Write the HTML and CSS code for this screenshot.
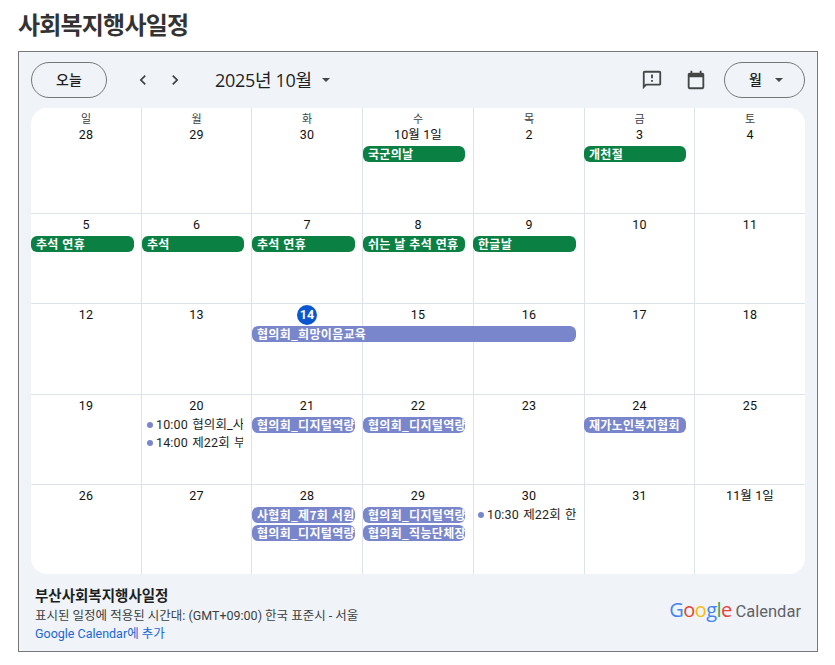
FILE: index.html
```html
<!DOCTYPE html>
<html lang="ko">
<head>
<meta charset="utf-8">
<title>사회복지행사일정</title>
<link rel="stylesheet" href="styles.css">
</head>
<body>
<h1 class="page-title">사회복지행사일정</h1>
<section class="frame">
  <header class="toolbar">
    <button class="pill today">오늘</button>
    <div class="nav">
      <svg class="chev" viewBox="0 0 24 24"><path d="M15.4 7.4 14 6l-6 6 6 6 1.4-1.4L10.8 12z"/></svg>
      <svg class="chev" viewBox="0 0 24 24"><path d="M8.6 7.4 10 6l6 6-6 6-1.4-1.4L13.2 12z"/></svg>
    </div>
    <div class="month">2025년 10월<span class="caret"></span></div>
    <div class="tools">
      <svg class="tool" viewBox="0 0 24 24"><path d="M20 2H4c-1.1 0-1.99.9-1.99 2L2 22l4-4h14c1.1 0 2-.9 2-2V4c0-1.1-.9-2-2-2zm0 14H5.17L4 17.17V4h16v12zM11 12h2v2h-2zm0-6h2v4h-2z"/></svg>
      <svg class="tool" viewBox="0 0 24 24"><path d="M19 4h-1V2h-2v2H8V2H6v2H5c-1.11 0-1.99.9-1.99 2L3 20c0 1.1.89 2 2 2h14c1.1 0 2-.9 2-2V6c0-1.1-.9-2-2-2zm0 16H5V9h14v11z"/></svg>
      <button class="pill view">월<span class="caret small"></span></button>
    </div>
  </header>

  <div class="cal">
    <div class="week first">
      <div class="cell"><span class="dow">일</span><span class="date">28</span></div>
      <div class="cell"><span class="dow">월</span><span class="date">29</span></div>
      <div class="cell"><span class="dow">화</span><span class="date">30</span></div>
      <div class="cell"><span class="dow">수</span><span class="date">10월 1일</span></div>
      <div class="cell"><span class="dow">목</span><span class="date">2</span></div>
      <div class="cell"><span class="dow">금</span><span class="date">3</span></div>
      <div class="cell"><span class="dow">토</span><span class="date">4</span></div>
      <div class="ev green c4">국군의날</div>
      <div class="ev green c6">개천절</div>
    </div>
    <div class="week">
      <div class="cell"><span class="date">5</span></div>
      <div class="cell"><span class="date">6</span></div>
      <div class="cell"><span class="date">7</span></div>
      <div class="cell"><span class="date">8</span></div>
      <div class="cell"><span class="date">9</span></div>
      <div class="cell"><span class="date">10</span></div>
      <div class="cell"><span class="date">11</span></div>
      <div class="ev green c1">추석 연휴</div>
      <div class="ev green c2">추석</div>
      <div class="ev green c3">추석 연휴</div>
      <div class="ev green c4">쉬는 날 추석 연휴</div>
      <div class="ev green c5">한글날</div>
    </div>
    <div class="week">
      <div class="cell"><span class="date">12</span></div>
      <div class="cell"><span class="date">13</span></div>
      <div class="cell"><span class="date now">14</span></div>
      <div class="cell"><span class="date">15</span></div>
      <div class="cell"><span class="date">16</span></div>
      <div class="cell"><span class="date">17</span></div>
      <div class="cell"><span class="date">18</span></div>
      <div class="ev blue c3 span3">협의회_희망이음교육</div>
    </div>
    <div class="week">
      <div class="cell"><span class="date">19</span></div>
      <div class="cell"><span class="date">20</span></div>
      <div class="cell"><span class="date">21</span></div>
      <div class="cell"><span class="date">22</span></div>
      <div class="cell"><span class="date">23</span></div>
      <div class="cell"><span class="date">24</span></div>
      <div class="cell"><span class="date">25</span></div>
      <div class="timed c2">10:00 협의회_사</div>
      <div class="timed c2 r2">14:00 제22회 부</div>
      <div class="ev blue c3">협의회_디지털역량</div>
      <div class="ev blue c4">협의회_디지털역량</div>
      <div class="ev blue c6">재가노인복지협회</div>
    </div>
    <div class="week">
      <div class="cell"><span class="date">26</span></div>
      <div class="cell"><span class="date">27</span></div>
      <div class="cell"><span class="date">28</span></div>
      <div class="cell"><span class="date">29</span></div>
      <div class="cell"><span class="date">30</span></div>
      <div class="cell"><span class="date">31</span></div>
      <div class="cell"><span class="date">11월 1일</span></div>
      <div class="ev blue c3">사협회_제7회 서원</div>
      <div class="ev blue c3 r2">협의회_디지털역량</div>
      <div class="ev blue c4">협의회_디지털역량</div>
      <div class="ev blue c4 r2">협의회_직능단체장</div>
      <div class="timed c5">10:30 제22회 한</div>
    </div>
  </div>

  <footer class="foot">
    <div class="foot-text">
      <div class="cal-name">부산사회복지행사일정</div>
      <div class="tz">표시된 일정에 적용된 시간대: (GMT+09:00) 한국 표준시 - 서울</div>
      <a class="add" href="#">Google Calendar에 추가</a>
    </div>
    <div class="brand"><span class="logo"><span class="g-b">G</span><span class="g-r">o</span><span class="g-y">o</span><span class="g-b">g</span><span class="g-g">l</span><span class="g-r">e</span></span> <span class="prod">Calendar</span></div>
  </footer>
</section>
</body>
</html>
```
FILE: styles.css
```css
* { box-sizing: border-box; }
html, body { margin: 0; padding: 0; background: #fff; }
body {
  width: 835px;
  padding: 0 17px 0 18px;
  font-family: "Noto Sans CJK KR", Roboto, sans-serif;
  color: #1f1f1f;
}
.page-title {
  margin: 0;
  height: 51px;
  padding: 6px 0 0;
  font-size: 24px;
  line-height: 36px;
  font-weight: 700;
  letter-spacing: -0.8px;
  color: #333;
}
.frame {
  width: 800px;
  height: 601px;
  border: 1px solid #787878;
  background: #f0f4f9;
  padding: 0 12px;
  display: flex;
  flex-direction: column;
}
.toolbar {
  height: 56px;
  display: flex;
  align-items: center;
  flex: none;
}
.pill {
  height: 36px;
  border: 1px solid #747775;
  border-radius: 18px;
  background: transparent;
  font: 500 14px/1 "Roboto", "Noto Sans CJK KR", sans-serif;
  color: #1f1f1f;
  padding: 0;
  display: flex;
  align-items: center;
  justify-content: center;
}
.today { width: 76px; }
.view { width: 81px; gap: 13px; padding-left: 3px; margin-left: -5px; }
.nav { display: flex; gap: 12px; margin-left: 26px; }
.chev { width: 20px; height: 20px; fill: #3c4043; }
.month {
  margin-left: 30px;
  font: 400 18px/24px "Open Sans", "Noto Sans CJK KR", sans-serif;
  letter-spacing: -0.3px;
  color: #1f1f1f;
  display: flex;
  align-items: center;
}
.caret {
  width: 0;
  height: 0;
  margin-left: 10px;
  border: 4px solid transparent;
  border-top-color: #444746;
  border-bottom: 0;
}
.caret.small { margin-left: 0; }
.tools { margin-left: auto; display: flex; align-items: center; gap: 22px; }
.tool { width: 22px; height: 22px; fill: #444746; }
.cal {
  height: 466px;
  flex: none;
  background: #fff;
  border-radius: 16px;
  overflow: hidden;
  display: grid;
  grid-template-rows: 106px 90px 91px 90px 89px;
}
.week {
  display: grid;
  grid-template-columns: 110px 110px 111px 111px 111px 110px 111px;
  grid-template-rows: 22px 18px 18px 1fr;
  border-bottom: 1px solid #dde3ea;
}
.week:last-child { border-bottom: 0; }
.week.first { grid-template-rows: 38px 18px 18px 1fr; }
.cell {
  grid-row: 1 / -1;
  border-left: 1px solid #dde3ea;
  display: flex;
  flex-direction: column;
  align-items: center;
  padding-top: 3px;
  font: 400 12px/15px Roboto, "Noto Sans CJK KR", sans-serif;
  color: #111;
}
.first .cell { padding-top: 4px; }
.cell:first-child { border-left: 0; }
.cell:nth-child(1) { grid-column: 1; }
.cell:nth-child(2) { grid-column: 2; }
.cell:nth-child(3) { grid-column: 3; }
.cell:nth-child(4) { grid-column: 4; }
.cell:nth-child(5) { grid-column: 5; }
.cell:nth-child(6) { grid-column: 6; }
.cell:nth-child(7) { grid-column: 7; }
.dow { font-size: 11px; line-height: 15px; color: #3c4043; }
.date { font-size: 12.5px; line-height: 15px; letter-spacing: 0.1px; }
.now {
  width: 20px;
  height: 20px;
  margin-top: -2px;
  border-radius: 50%;
  background: #0b57d0;
  color: #fff;
  font-weight: 700;
  line-height: 20px;
  text-align: center;
}
.ev {
  grid-row: 2;
  height: 16px;
  margin: 0 7px 0 1px;
  padding-left: 5px;
  border-radius: 6px;
  color: #fff;
  font: 700 12px/15px "Noto Sans CJK KR", Roboto, sans-serif;
  letter-spacing: 0.3px;
  white-space: nowrap;
  overflow: hidden;
  z-index: 1;
}
.green { background: #0b8043; }
.blue { background: #7986cb; }
.timed {
  grid-row: 2;
  height: 16px;
  padding-left: 14px;
  margin: 0 8px 0 1px;
  position: relative;
  font: 400 12.5px/16px Roboto, "Noto Sans CJK KR", sans-serif;
  letter-spacing: 0.15px;
  word-spacing: 1px;
  color: #1f1f1f;
  white-space: nowrap;
  overflow: hidden;
  z-index: 1;
}
.timed::before {
  content: "";
  position: absolute;
  left: 5px;
  top: 5px;
  width: 6px;
  height: 6px;
  border-radius: 50%;
  background: #7986cb;
}
.r2 { grid-row: 3; }
.c1 { grid-column: 1; margin-left: 0; margin-right: 7px; }
.c2 { grid-column: 2; }
.c3 { grid-column: 3; }
.c4 { grid-column: 4; margin-right: 8px; }
.c5 { grid-column: 5; margin-left: 0; margin-right: 8px; }
.c6 { grid-column: 6; margin-left: 0; margin-right: 8px; }
.span3 { grid-column: 3 / span 3; margin-right: 8px; }
.foot {
  flex: 1;
  display: flex;
  justify-content: space-between;
  align-items: flex-start;
  padding: 10px 4px 0 4px;
}
.cal-name {
  font: 700 14.5px/21px "Noto Sans CJK KR", sans-serif;
  color: #1f1f1f;
}
.tz {
  margin-top: 2px;
  font: 400 12.5px/18px Roboto, "Noto Sans CJK KR", sans-serif;
  color: #3c4043;
}
.add {
  display: block;
  font: 400 12.5px/18px Roboto, "Noto Sans CJK KR", sans-serif;
  color: #1a66d6;
  text-decoration: none;
}
.brand {
  display: flex;
  align-items: baseline;
  gap: 4px;
  margin-top: 14px;
  white-space: nowrap;
}
.logo { font: 500 20px/24px "Open Sans", sans-serif; letter-spacing: -0.6px; }
.prod { font: 400 16.5px/24px Roboto, sans-serif; color: #5f6368; }
.g-b { color: #4285f4; }
.g-r { color: #ea4335; }
.g-y { color: #fbbc05; }
.g-g { color: #34a853; }
```
